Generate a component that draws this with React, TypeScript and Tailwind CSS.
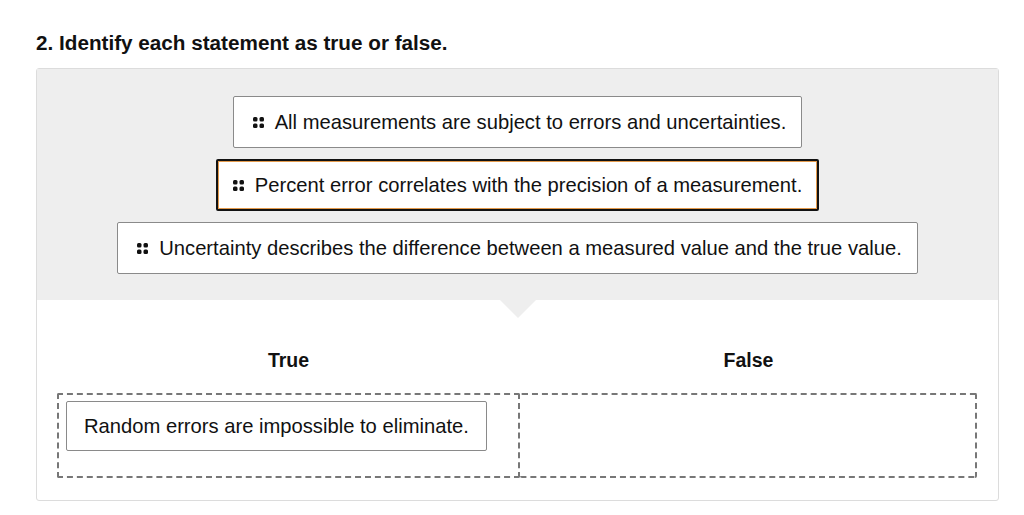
import React from 'react';

// Drag-and-drop true/false sorting question

const statements = [
  { text: 'All measurements are subject to errors and uncertainties.', selected: false },
  { text: 'Percent error correlates with the precision of a measurement.', selected: true },
  { text: 'Uncertainty describes the difference between a measured value and the true value.', selected: false },
];

function Grip() {
  return (
    <svg width="11" height="11" viewBox="0 0 11 11" className="shrink-0">
      <rect x="0" y="0" width="4.5" height="4.5" rx="1.5" fill="#111" />
      <rect x="6.5" y="0" width="4.5" height="4.5" rx="1.5" fill="#111" />
      <rect x="0" y="6.5" width="4.5" height="4.5" rx="1.5" fill="#111" />
      <rect x="6.5" y="6.5" width="4.5" height="4.5" rx="1.5" fill="#111" />
    </svg>
  );
}

function StatementCard({ text, selected }: { text: string; selected: boolean }) {
  return (
    <div
      className={
        selected
          ? 'flex items-center gap-[11px] bg-white border-[2px] border-[#111] rounded-[2px] shadow-[inset_0_0_0_1px_#e39a4c] px-[15px] h-[52px]'
          : 'flex items-center gap-[11px] bg-white border border-[#8a8a8a] rounded-[2px] pl-[19px] pr-[15px] h-[52px]'
      }
    >
      <Grip />
      <span className="text-[20.2px] text-[#111]">{text}</span>
    </div>
  );
}

export default function App() {
  return (
    <div className="min-h-[515px] bg-white pt-[30px] px-[36px] font-['Liberation_Sans',Arial,sans-serif] text-[#111]">
      <h2 className="text-[20.7px] font-bold leading-[26px] mb-[12px]">2. Identify each statement as true or false.</h2>

      <div className="w-[963px] border border-[#dcdcdc] rounded-[3px] bg-white">
        <div className="relative bg-[#eeeeee] pt-[27px] pb-[26px] flex flex-col items-center gap-[11px]">
          {statements.map((s) => (
            <StatementCard key={s.text} text={s.text} selected={s.selected} />
          ))}
          <div className="absolute left-[463px] -bottom-[18px] w-0 h-0 border-l-[18px] border-r-[18px] border-t-[18px] border-l-transparent border-r-transparent border-t-[#eeeeee]" />
        </div>

        <div className="pl-[20px] pr-[21px] pt-[48px] pb-[22px]">
          <div className="grid grid-cols-[463px_1fr] text-[19.5px] font-bold leading-[24px] mb-[21px]">
            <div className="text-center">True</div>
            <div className="text-center">False</div>
          </div>
          <div className="grid grid-cols-[463px_1fr] h-[85px]">
            <div className="border-[2px] border-dashed border-[#777] rounded-[2px] pl-[7px] pt-[6px]">
              <div className="inline-flex items-center h-[50px] px-[17px] bg-white border border-[#8a8a8a] rounded-[2px] text-[20.2px]">
                Random errors are impossible to eliminate.
              </div>
            </div>
            <div className="border-[2px] border-l-0 border-dashed border-[#777] rounded-[2px]" />
          </div>
        </div>
      </div>
    </div>
  );
}
